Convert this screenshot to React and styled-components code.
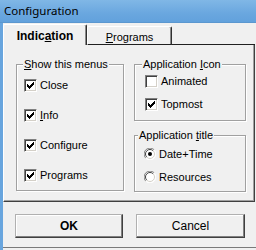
import React from "react";
import styled, { createGlobalStyle, css } from "styled-components";

const Global = createGlobalStyle`
  html, body { margin: 0; padding: 0; background: #f0f0f0; }
  body { font-family: "Liberation Sans", Arial, sans-serif; font-size: 11px; color: #000; }
  * { box-sizing: border-box; }
`;

const Window = styled.div`
  width: 256px;
  height: 250px;
  overflow: hidden;
  display: flex;
  flex-direction: column;
  background: #f0f0f0;
`;

const TitleBar = styled.div`
  height: 23px;
  flex: none;
  display: flex;
  align-items: center;
  padding-left: 4px;
  background: linear-gradient(to bottom, #80b7e6 0%, #6aa7df 60%, #62a1dc 100%);
  border-bottom: 1px solid #5b97cf;
`;

const Title = styled.span`
  font-family: "Noto Sans", "Open Sans", sans-serif;
  font-size: 11.5px;
  line-height: 14px;
  margin-top: -1px;
`;

const Frame = styled.div`
  flex: 1;
  display: flex;
  border-left: 3px solid #68a5de;
`;

const Client = styled.div`
  flex: 1;
  display: flex;
  flex-direction: column;
  background: #f0f0f0;
  border-bottom: 1px solid #7a7a7a;
  margin-bottom: 2px;
`;

const TabStrip = styled.div`
  height: 22px;
  display: flex;
  align-items: flex-end;
  margin-right: 1px;
`;

const Tab = styled.div`
  display: flex;
  align-items: center;
  justify-content: center;
  background: #f0f0f0;
  border-top: 1px solid #ffffff;
  border-left: 1px solid #ffffff;
  border-right: 1px solid #303030;
  box-shadow: inset -1px 0 0 #8a8a8a;
  border-top-left-radius: 2px;
  border-top-right-radius: 2px;
  ${(p) =>
    p.$active
      ? css`
          width: 84px;
          height: 21px;
          font-size: 12px;
          font-weight: bold;
          padding-top: 1px;
        `
      : css`
          width: 85px;
          height: 19px;
          border-bottom: 1px solid #202020;
          font-size: 11px;
          padding-top: 2px;
        `}
`;

const TabFill = styled.div`
  flex: 1;
  border-bottom: 1px solid #202020;
`;

const Panel = styled.div`
  display: grid;
  grid-template-columns: 108px 112px;
  column-gap: 10px;
  align-items: start;
  padding: 19px 8px 9px 12px;
  margin-right: 1px;
  background: #f0f0f0;
  border-left: 1px solid #ffffff;
  border-right: 1px solid #404040;
  border-bottom: 1px solid #404040;
  box-shadow: inset -1px -1px 0 #a0a0a0;
`;

const Column = styled.div`
  display: flex;
  flex-direction: column;
  gap: 14px;
`;

const Group = styled.div`
  position: relative;
  display: flex;
  flex-direction: column;
  border: 1px solid #a0a0a0;
  box-shadow: inset 1px 1px 0 #ffffff, 1px 1px 0 #ffffff;
  padding: ${(p) => p.$pad};
  gap: ${(p) => p.$gap}px;
`;

const Legend = styled.span`
  position: absolute;
  top: -8px;
  left: ${(p) => p.$left}px;
  padding: 0 1px;
  line-height: 14px;
  background: #f0f0f0;
`;

const Row = styled.label`
  display: flex;
  align-items: center;
  gap: 3px;
  height: ${(p) => p.$h || 13}px;
  line-height: 13px;
`;

const Box = styled.span`
  width: 13px;
  height: 13px;
  flex: none;
  background: #fff;
  border: 1px solid;
  border-color: #808080 #ffffff #ffffff #808080;
  box-shadow: inset 1px 1px 0 #404040, inset -1px -1px 0 #d4d0c8;
  display: flex;
  align-items: center;
  justify-content: center;
`;

const RadioSvg = styled.svg`
  flex: none;
  display: block;
`;

const ButtonRow = styled.div`
  display: flex;
  gap: 13px;
  padding: 12px 0 0 12px;
`;

const Button = styled.div`
  width: ${(p) => p.$w}px;
  height: 24px;
  display: flex;
  align-items: center;
  justify-content: center;
  background: #f0f0f0;
  border: 1px solid;
  border-color: #b0b0b0 #404040 #404040 #b0b0b0;
  box-shadow: inset -1px -1px 0 #808080, inset 1px 1px 0 #ffffff;
  font-size: 12px;
  font-weight: ${(p) => (p.$bold ? "bold" : "normal")};
`;

const Check = ({ checked }) => (
  <Box>
    {checked && (
      <svg width="7" height="7" viewBox="0 0 7 7" style={{ display: "block" }}>
        <path
          d="M0 2h1v3H0z M1 3h1v3H1z M2 4h1v3H2z M3 3h1v3H3z M4 2h1v3H4z M5 1h1v3H5z M6 0h1v3H6z"
          fill="#000"
        />
      </svg>
    )}
  </Box>
);

const Radio = ({ checked }) => (
  <RadioSvg width="12" height="12" viewBox="0 0 12 12">
    <circle cx="6" cy="6" r="5.5" fill="#fff" />
    <path d="M10.2 1.8 A5.5 5.5 0 0 0 1.8 10.2" fill="none" stroke="#808080" strokeWidth="1" />
    <path d="M1.8 10.2 A5.5 5.5 0 0 0 10.2 1.8" fill="none" stroke="#ffffff" strokeWidth="1" />
    <path d="M9.2 2.8 A4.5 4.5 0 0 0 2.8 9.2" fill="none" stroke="#404040" strokeWidth="1" />
    <path d="M2.8 9.2 A4.5 4.5 0 0 0 9.2 2.8" fill="none" stroke="#d4d0c8" strokeWidth="1" />
    {checked && <circle cx="6" cy="6" r="2" fill="#000" />}
  </RadioSvg>
);

export default function App() {
  return (
    <>
      <Global />
      <Window>
        <TitleBar>
          <Title>Configuration</Title>
        </TitleBar>
        <Frame>
          <Client>
            <TabStrip>
              <Tab $active>
                Indic<u>a</u>tion
              </Tab>
              <Tab>
                <u>P</u>rograms
              </Tab>
              <TabFill />
            </TabStrip>
            <Panel>
              <Group $pad="14px 6px 8px 7px" $gap={17}>
                <Legend $left={6}>
                  <u>S</u>how this menus
                </Legend>
                <Row>
                  <Check checked /> Close
                </Row>
                <Row>
                  <Check checked /> <span><u>I</u>nfo</span>
                </Row>
                <Row>
                  <Check checked /> Configure
                </Row>
                <Row>
                  <Check checked /> Programs
                </Row>
              </Group>
              <Column>
                <Group $pad="10px 6px 9px 10px" $gap={10}>
                  <Legend $left={7}>
                    Application <u>I</u>con
                  </Legend>
                  <Row>
                    <Check /> Animated
                  </Row>
                  <Row>
                    <Check checked /> Topmost
                  </Row>
                </Group>
                <Group $pad="12px 6px 8px 9px" $gap={11}>
                  <Legend $left={3}>
                    Application <u>t</u>itle
                  </Legend>
                  <Row $h={12}>
                    <Radio checked /> Date+Time
                  </Row>
                  <Row $h={12}>
                    <Radio /> Resources
                  </Row>
                </Group>
              </Column>
            </Panel>
            <ButtonRow>
              <Button $w={108} $bold>
                OK
              </Button>
              <Button $w={109}>Cancel</Button>
            </ButtonRow>
          </Client>
        </Frame>
      </Window>
    </>
  );
}
